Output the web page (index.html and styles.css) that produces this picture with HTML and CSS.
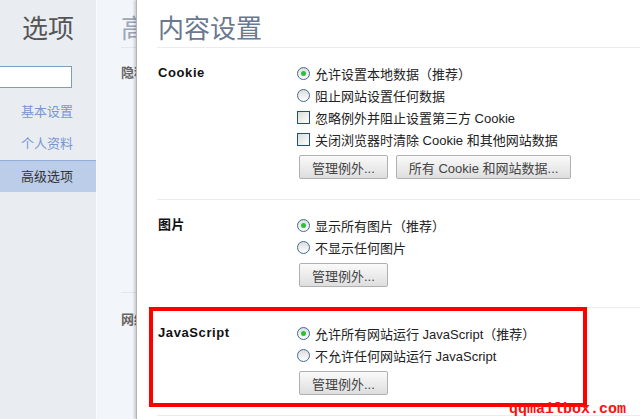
FILE: index.html
```html
<!DOCTYPE html>
<html lang="zh-CN">
<head>
    <meta charset="UTF-8">
    <title>内容设置</title>
    <link rel="stylesheet" href="styles.css">
</head>
<body>
    <div class="sidebar">
        <h1 class="side-title">选项</h1>
        <input class="search" type="text">
        <ul class="nav">
            <li>基本设置</li>
            <li>个人资料</li>
            <li class="active">高级选项</li>
        </ul>
    </div>

    <div class="page">
        <h1 class="page-title"><span class="clip">高级选项</span></h1>
        <div class="page-section"><span class="clip">隐私设置</span></div>
        <div class="page-section page-net"><span class="clip">网络</span></div>

        <div class="overlay">
            <h1 class="overlay-title">内容设置</h1>

            <div class="section">
                <div class="label">Cookie</div>
                <div class="options">
                    <div class="row"><span class="radio checked"></span>允许设置本地数据（推荐）</div>
                    <div class="row"><span class="radio"></span>阻止网站设置任何数据</div>
                    <div class="row"><span class="check"></span>忽略例外并阻止设置第三方 Cookie</div>
                    <div class="row"><span class="check"></span>关闭浏览器时清除 Cookie 和其他网站数据</div>
                    <div class="buttons">
                        <button>管理例外...</button>
                        <button>所有 Cookie 和网站数据...</button>
                    </div>
                </div>
            </div>

            <div class="section">
                <div class="label">图片</div>
                <div class="options">
                    <div class="row"><span class="radio checked"></span>显示所有图片（推荐）</div>
                    <div class="row"><span class="radio"></span>不显示任何图片</div>
                    <div class="buttons">
                        <button>管理例外...</button>
                    </div>
                </div>
            </div>

            <div class="section">
                <div class="label">JavaScript</div>
                <div class="options">
                    <div class="row"><span class="radio checked"></span>允许所有网站运行 JavaScript（推荐）</div>
                    <div class="row"><span class="radio"></span>不允许任何网站运行 JavaScript</div>
                    <div class="buttons">
                        <button>管理例外...</button>
                    </div>
                </div>
            </div>
            <div class="section-end"></div>
        </div>
    </div>

    <div class="highlight"></div>
    <div class="watermark">qqmailbox.com</div>
</body>
</html>
```

FILE: styles.css
```css
body {
    margin: 0;
    height: 419px;
    overflow: hidden;
    display: flex;
    font-family: "Liberation Sans", "Noto Sans CJK SC", sans-serif;
    font-size: 13px;
    color: #222;
    position: relative;
}
.sidebar {
    width: 96px;
    flex-shrink: 0;
    background-color: #e9edf2;
    border-right: 1px solid #fafbfc;
    overflow: hidden;
    text-align: right;
}
.side-title {
    margin: 0;
    padding: 12px 22px 0 0;
    height: 42px;
    font-size: 26px;
    font-weight: normal;
    color: #555;
    line-height: 34px;
}
.search {
    display: block;
    margin: 12px 24px 0 -10px;
    width: 82px;
    height: 22px;
    box-sizing: border-box;
    border: 1px solid #7f9db9;
    background-color: #fff;
}
.nav {
    list-style: none;
    margin: 8px 0 0;
    padding: 0;
}
.nav li {
    height: 32px;
    line-height: 32px;
    padding-right: 23px;
    color: #7797cf;
}
.nav li.active {
    background-color: #bccde9;
    border-top: 1px solid #95afdb;
    height: 31px;
    color: #333;
}
.page {
    flex: 1;
    position: relative;
    background-color: #f2f5f9;
    padding-left: 24px;
    overflow: hidden;
}
.clip {
    display: block;
    width: 15px;
    overflow: hidden;
    white-space: nowrap;
}
.page-title {
    margin: 0;
    padding-top: 12px;
    height: 35px;
    border-bottom: 1px solid #e3e7ec;
    font-size: 26px;
    font-weight: normal;
    color: #9aa6b8;
    line-height: 34px;
}
.page-section {
    margin-top: 14px;
    font-weight: bold;
    color: #666;
}
.page-net {
    margin-top: 211px;
    padding-top: 16px;
    border-top: 1px solid #e3e7ec;
}
.overlay {
    position: absolute;
    left: 39px;
    top: 0;
    right: 0;
    bottom: 0;
    background-color: #fff;
    border-left: 1px solid #b4b4b4;
    box-shadow: -2px 0 2px rgba(0, 0, 0, 0.15);
    padding-left: 20px;
    overflow: hidden;
}
.overlay-title {
    margin: 0;
    padding: 12px 0 0 1px;
    height: 35px;
    font-size: 26px;
    font-weight: normal;
    color: #6a7890;
    line-height: 34px;
}
.section {
    display: flex;
    border-top: 1px solid #ececec;
    padding: 14px 0 20px;
}
.section-end {
    border-top: 1px solid #ececec;
}
.label {
    width: 139px;
    padding-left: 1px;
    line-height: 22px;
    font-weight: bold;
    letter-spacing: 0.6px;
    color: #111;
}
.row {
    display: flex;
    align-items: center;
    height: 22px;
    white-space: nowrap;
}
.radio {
    width: 11px;
    height: 11px;
    border: 1px solid #3d6a9a;
    border-radius: 50%;
    background: linear-gradient(#dcdcdc, #fff);
    margin-right: 5px;
    position: relative;
}
.radio.checked::after {
    content: "";
    position: absolute;
    left: 3px;
    top: 3px;
    width: 5px;
    height: 5px;
    border-radius: 50%;
    background-color: #2fbf3a;
}
.check {
    width: 11px;
    height: 11px;
    border: 1px solid #1c5180;
    background: linear-gradient(135deg, #dcdcd6, #fff);
    margin-right: 5px;
}
.buttons {
    display: flex;
    gap: 8px;
    margin-top: 5px;
    padding-left: 2px;
}
button {
    height: 24px;
    padding: 0 12px;
    font-family: "Liberation Sans", "Noto Sans CJK SC", sans-serif;
    font-size: 13px;
    color: #444;
    border: 1px solid #b0b0b0;
    border-radius: 2px;
    background: linear-gradient(#fafafa, #dedede);
}
.highlight {
    position: absolute;
    left: 149px;
    top: 307px;
    width: 430px;
    height: 92px;
    border: 4px solid #ff0000;
}
.watermark {
    position: absolute;
    left: 509px;
    top: 402px;
    font-family: "Liberation Mono", monospace;
    font-size: 15px;
    font-weight: bold;
    color: #ff1010;
    line-height: 16px;
}
```
